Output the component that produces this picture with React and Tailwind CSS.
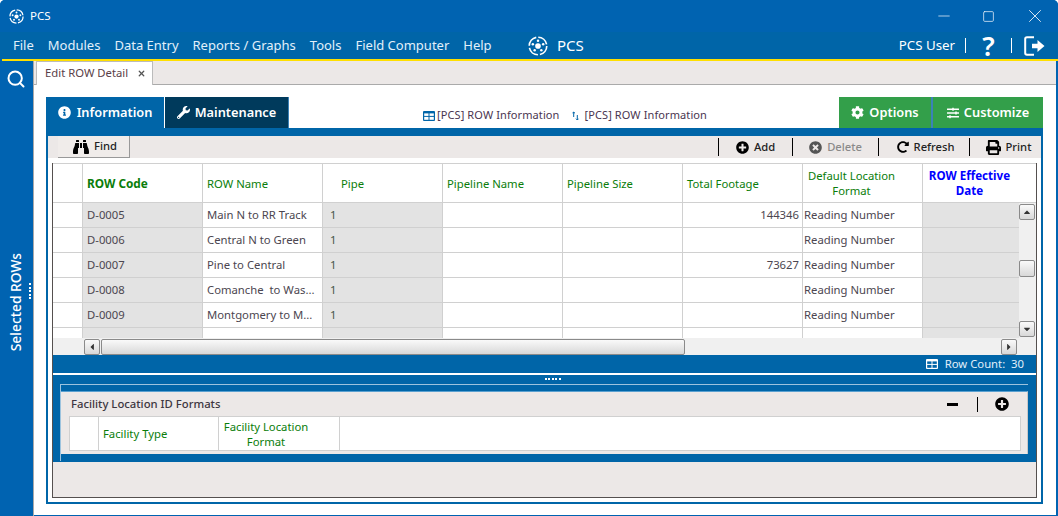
import { Search, Minus, Square, X } from 'lucide-react';
import {
  FaInfoCircle,
  FaWrench,
  FaCog,
  FaSlidersH,
  FaBinoculars,
  FaPlusCircle,
  FaTimesCircle,
  FaRedoAlt,
  FaPrint,
  FaCaretUp,
  FaCaretDown,
  FaCaretLeft,
  FaCaretRight,
} from 'react-icons/fa';

const menuItems = ['File', 'Modules', 'Data Entry', 'Reports / Graphs', 'Tools', 'Field Computer', 'Help'];

const rows = [
  { code: 'D-0005', name: 'Main N to RR Track', footage: '144346' },
  { code: 'D-0006', name: 'Central N to Green', footage: '' },
  { code: 'D-0007', name: 'Pine to Central', footage: '73627' },
  { code: 'D-0008', name: 'Comanche  to Was...', footage: '' },
  { code: 'D-0009', name: 'Montgomery to M...', footage: '' },
];

function Logo({ className }) {
  return (
    <svg viewBox="0 0 24 24" className={className} fill="none" stroke="currentColor">
      <circle cx="12" cy="12" r="10.5" strokeWidth="2" strokeDasharray="14 2.5" />
      <circle cx="12" cy="12" r="3.4" fill="currentColor" stroke="none" />
      <circle cx="12" cy="5.6" r="1.5" fill="currentColor" stroke="none" />
      <circle cx="5.8" cy="10" r="1.5" fill="currentColor" stroke="none" />
      <circle cx="18.2" cy="10" r="1.5" fill="currentColor" stroke="none" />
      <circle cx="8" cy="17.2" r="1.5" fill="currentColor" stroke="none" />
      <circle cx="16" cy="17.2" r="1.5" fill="currentColor" stroke="none" />
    </svg>
  );
}

function TableIcon({ className, cut = '#fff' }) {
  return (
    <svg viewBox="0 0 12 10" className={className}>
      <rect width="12" height="10" rx="1" fill="currentColor" />
      <rect x="1.2" y="2.4" width="4.3" height="2.5" fill={cut} />
      <rect x="6.5" y="2.4" width="4.3" height="2.5" fill={cut} />
      <rect x="1.2" y="5.9" width="4.3" height="2.9" fill={cut} />
      <rect x="6.5" y="5.9" width="4.3" height="2.9" fill={cut} />
    </svg>
  );
}

function ExitIcon({ className }) {
  return (
    <svg viewBox="0 0 21 20" className={className}>
      <path d="M10 1.2H3A1.8 1.8 0 0 0 1.2 3v14A1.8 1.8 0 0 0 3 18.8h7" fill="none" stroke="currentColor" strokeWidth="2" />
      <path d="M8 7.8h5.5V4l7 6-7 6v-3.8H8z" fill="currentColor" />
    </svg>
  );
}

function ScrollButton({ children, className }) {
  return (
    <div
      className={`flex justify-center items-center w-[16px] h-[16px] rounded-[2px] border border-[#8a8a8a] bg-gradient-to-b from-[#fafafa] to-[#d8d8d8] text-[#333] ${className || ''}`}
    >
      {children}
    </div>
  );
}

function HeaderCell({ width, children, className }) {
  return (
    <div
      className={`flex items-center h-full pl-[4px] border-r border-[#d0d0d0] leading-[15px] text-[#0a7d0a] ${width} ${className || ''}`}
    >
      {children}
    </div>
  );
}

function Cell({ width, gray, children, className }) {
  return (
    <div
      className={`flex items-center h-full pt-[1px] border-r border-[#d0d0d0] whitespace-pre ${width} ${gray ? 'bg-[#e3e3e3]' : ''} ${className || ''}`}
    >
      {children}
    </div>
  );
}

function ToolItem({ icon, label, width, className }) {
  return (
    <div className={`flex justify-center items-center gap-[5px] h-[18px] border-l border-black ${width} ${className || ''}`}>
      {icon}
      <span>{label}</span>
    </div>
  );
}

export default function App() {
  return (
    <div className="flex flex-col w-[1058px] h-[516px] overflow-hidden rounded-t-[5px] bg-[#0063b1] font-['Noto_Sans',sans-serif] text-[11.3px] text-[#4c4650]">
      {/* title bar */}
      <div className="flex items-center h-[32px] pl-[9px] text-white bg-[#0063b1]">
        <Logo className="w-[15px] h-[15px]" />
        <span className="ml-[6px] text-[11.5px]">PCS</span>
        <div className="flex items-center ml-auto text-[#e8f0f8]">
          <Minus size={18} strokeWidth={1} className="mr-[29px]" />
          <Square size={13} strokeWidth={1.4} className="mr-[29px]" />
          <X size={22} strokeWidth={1} className="mr-[12px]" />
        </div>
      </div>

      {/* menu bar */}
      <div className="flex items-center h-[27px] pl-[13px] bg-[#0065a8] text-[13px] text-[#e2f0fa]">
        <div className="flex gap-[14px] w-[505px] pt-[1px] whitespace-nowrap">
          {menuItems.map((item) => (
            <span key={item}>{item}</span>
          ))}
        </div>
        <Logo className="ml-[10px] w-[20px] h-[20px] text-white" />
        <span className="ml-[9px] text-[15px] text-white">PCS</span>
        <div className="flex items-center ml-auto text-white">
          <span className="pt-[1px] text-[13.3px]">PCS User</span>
          <div className="ml-[10px] h-[15px] border-l border-white" />
          <span className="w-[45px] text-center text-[27px] leading-none font-semibold">?</span>
          <div className="h-[15px] border-l border-white" />
          <ExitIcon className="ml-[12px] mr-[13px] w-[21px] h-[20px]" />
        </div>
      </div>

      <div className="h-[2px] ml-[2px] bg-[#ffdf00]" />

      <div className="flex flex-1 min-h-0">
        {/* left side bar */}
        <div className="relative flex flex-col items-center w-[34px] pt-[8px] pr-[1px] text-white border-r border-[#a9a9a9]">
          <Search size={20} strokeWidth={2.4} />
          <div className="mt-[164px] [writing-mode:vertical-rl] rotate-180 text-[13.8px] font-medium whitespace-nowrap">
            Selected ROWs
          </div>
          <div className="absolute left-[29px] top-[222px] flex flex-col gap-[1.5px]">
            {[0, 1, 2, 3, 4].map((d) => (
              <div key={d} className="w-[2px] h-[2px] bg-white" />
            ))}
          </div>
        </div>

        {/* content */}
        <div className="flex flex-col flex-1 min-w-0 bg-white mr-[2px] mb-px">
          <div className="flex items-end h-[24px] pl-[2px] bg-[#ece8e7] border-b border-[#aaa]">
            <div className="flex items-center w-[117px] h-[24px] -mb-px pl-[8px] bg-white border-x border-t border-[#bbb] text-[11.3px] text-[#5a4048]">
              Edit ROW Detail
              <X size={9} strokeWidth={3.4} className="ml-[9px] text-[#555]" />
            </div>
          </div>

          <div className="flex flex-col flex-1 min-h-0 pt-[12px] pl-[12px] pr-[13px]">
            {/* panel tabs */}
            <div className="flex items-stretch h-[31px] text-white text-[12.8px] font-semibold">
              <div className="flex items-center justify-center gap-[6px] w-[118px] bg-[#0065a8]">
                <FaInfoCircle size={13} />
                Information
              </div>
              <div className="flex items-center justify-center gap-[5px] w-[124px] ml-px bg-[#003a5c] border-r border-[#3b82b8]">
                <FaWrench size={13} />
                Maintenance
              </div>
              <div className="flex items-center flex-1 justify-center pt-[6px] pl-[2px] gap-[12px] text-[11px] tracking-[0.1px] font-normal text-[#4a3550] whitespace-nowrap">
                <span className="flex items-center gap-[2px]">
                  <TableIcon className="w-[12px] h-[10px] text-[#0065a8]" />
                  [PCS] ROW Information
                </span>
                <span className="flex items-center gap-[6px]">
                  <svg viewBox="0 0 7 10" className="w-[7px] h-[10px]" fill="none" stroke="#0065a8" strokeWidth="1">
                    <path d="M1.7 6V1M.4 2.3 1.7 1 3 2.3M5.3 4v5M4 7.7 5.3 9l1.3-1.3" />
                  </svg>
                  [PCS] ROW Information
                </span>
              </div>
              <div className="flex items-center justify-center gap-[5px] w-[94px] bg-[#339f4a] border-r-2 border-[#3b82b8]">
                <FaCog size={13} />
                Options
              </div>
              <div className="flex items-center justify-center gap-[5px] w-[110px] bg-[#339f4a]">
                <FaSlidersH size={12} />
                Customize
              </div>
            </div>

            <div className="flex flex-col flex-1 min-h-0 border-2 border-t-[8px] border-[#0065a8] mb-[11px] bg-white">
              {/* toolbar */}
              <div className="flex items-center h-[22px] bg-[#ece8e7] text-[#222] text-[11.2px] font-medium shrink-0">
                <button className="flex justify-center items-center gap-[5px] w-[72px] h-[22px] ml-[10px] pl-[3px] border-r border-b border-[#999] bg-[#f0ecea] text-[#222]">
                  <FaBinoculars size={16} className="text-black" />
                  Find
                </button>
                <div className="flex items-center ml-auto">
                  <ToolItem width="w-[74px]" label="Add" icon={<FaPlusCircle size={13} className="text-black" />} />
                  <ToolItem width="w-[86px]" label="Delete" className="text-[#8a8a8a]" icon={<FaTimesCircle size={13} className="text-[#555]" />} />
                  <ToolItem width="w-[91px]" label="Refresh" className="pl-[3px]" icon={<FaRedoAlt size={12} className="text-black" />} />
                  <ToolItem width="w-[72px]" label="Print" className="pl-[6px]" icon={<FaPrint size={15} className="text-black" />} />
                </div>
              </div>

              {/* main grid */}
              <div className="flex flex-col flex-1 min-h-0 mt-[5px] mx-[4px] mb-[4px] border border-[#55504f] border-t-0 bg-[#ece8e7]">
                <div className="flex flex-col shrink-0 bg-white border-t border-[#d0d0d0] text-[#4c4650]">
                  <div className="flex items-center h-[39px] border-b border-[#d0d0d0]">
                    <HeaderCell width="w-[30px]" />
                    <HeaderCell width="w-[120px]" className="font-bold text-[11.8px]">ROW Code</HeaderCell>
                    <HeaderCell width="w-[120px]">ROW Name</HeaderCell>
                    <HeaderCell width="w-[120px]" className="pl-[18px]">Pipe</HeaderCell>
                    <HeaderCell width="w-[120px]">Pipeline Name</HeaderCell>
                    <HeaderCell width="w-[120px]">Pipeline Size</HeaderCell>
                    <HeaderCell width="w-[120px]">Total Footage</HeaderCell>
                    <HeaderCell width="w-[120px]" className="justify-center text-center !pl-0 pr-[22px]">Default Location Format</HeaderCell>
                    <HeaderCell width="w-[97px]" className="justify-center text-center font-bold text-[11.6px] !text-[#0000ff] !border-r-0 !pl-0 pr-[4px]">ROW Effective Date</HeaderCell>
                  </div>
                  <div className="flex">
                    <div className="flex flex-col w-[966px] h-[135px] overflow-hidden">
                      {[...rows, { code: '', name: '', footage: '' }].map((row, i) => (
                        <div key={i} className="flex items-center shrink-0 h-[25px] border-b border-[#d0d0d0]">
                          <Cell width="w-[30px]" />
                          <Cell width="w-[120px]" gray className="pl-[4px]">{row.code}</Cell>
                          <Cell width="w-[120px]" className="pl-[4px]">{row.name}</Cell>
                          <Cell width="w-[120px]" gray className="pl-[7px] text-[#47574c]">{row.code ? '1' : ''}</Cell>
                          <Cell width="w-[120px]" />
                          <Cell width="w-[120px]" />
                          <Cell width="w-[120px]" className="justify-end pr-[3px]">{row.footage}</Cell>
                          <Cell width="w-[120px]" className="pl-[1px]">{row.code ? 'Reading Number' : ''}</Cell>
                          <Cell width="w-[96px]" gray className="!border-r-0" />
                        </div>
                      ))}
                    </div>
                    <div className="flex flex-col items-center flex-1 pt-[1px] pb-[1px] pr-[1px] bg-[#f0f0f0]">
                      <ScrollButton><FaCaretUp size={10} /></ScrollButton>
                      <ScrollButton className="mt-[40px] !h-[17px]" />
                      <ScrollButton className="mt-auto"><FaCaretDown size={10} /></ScrollButton>
                    </div>
                  </div>
                </div>

                {/* horizontal scroll bar */}
                <div className="flex items-center shrink-0 h-[17px] pl-[31px] pr-[19px] bg-[#f0f0f0]">
                  <ScrollButton><FaCaretLeft size={10} /></ScrollButton>
                  <div className="w-[584px] h-[16px] ml-px rounded-[2px] border border-[#8a8a8a] bg-gradient-to-b from-[#fafafa] to-[#d8d8d8]" />
                  <ScrollButton className="ml-auto"><FaCaretRight size={10} /></ScrollButton>
                </div>

                <div className="flex justify-end items-center shrink-0 gap-[7px] h-[18px] pr-[12px] bg-[#0065a8] text-[#e2f0fa]">
                  <TableIcon cut="#0065a8" className="w-[12px] h-[10px] text-white" />
                  <span>Row Count:&nbsp; 30</span>
                </div>

                {/* lower panel */}
                <div className="h-[2px] bg-white shrink-0" />
                <div className="relative flex flex-col shrink-0 h-[87px] pt-[9px] pl-[7px] pr-[8px] bg-[#0065a8]">
                  <div className="absolute left-1/2 top-[3px] flex gap-[1.5px]">
                    {[0, 1, 2, 3, 4].map((d) => (
                      <div key={d} className="w-[2px] h-[2px] bg-white" />
                    ))}
                  </div>
                  <div className="flex flex-col h-[77px] border-t border-l border-[#9cc3de] pt-[6px]">
                    <div className="flex flex-col h-[63px] bg-[#ece8e7] border-t border-[#5aa0d0] border-r border-r-[#c8c8c8]">
                      <div className="flex items-center h-[24px] shrink-0 pl-[10px] pr-[18px] text-[#3c3640] font-medium">
                        Facility Location ID Formats
                        <div className="flex items-center ml-auto text-black">
                          <div className="w-[11px] h-[3px] bg-black" />
                          <div className="ml-[19px] h-[15px] border-l border-black" />
                          <FaPlusCircle size={14} className="ml-[17px]" />
                        </div>
                      </div>
                      <div className="flex items-center h-[35px] ml-[8px] mr-[6px] bg-white border border-[#d0d0d0] text-center">
                        <HeaderCell width="w-[29px]" />
                        <HeaderCell width="w-[120px]">Facility Type</HeaderCell>
                        <HeaderCell width="w-[121px]" className="justify-center !pl-0 pr-[26px]">Facility Location Format</HeaderCell>
                      </div>
                    </div>
                  </div>
                </div>
              </div>
            </div>
          </div>
        </div>
      </div>
    </div>
  );
}
